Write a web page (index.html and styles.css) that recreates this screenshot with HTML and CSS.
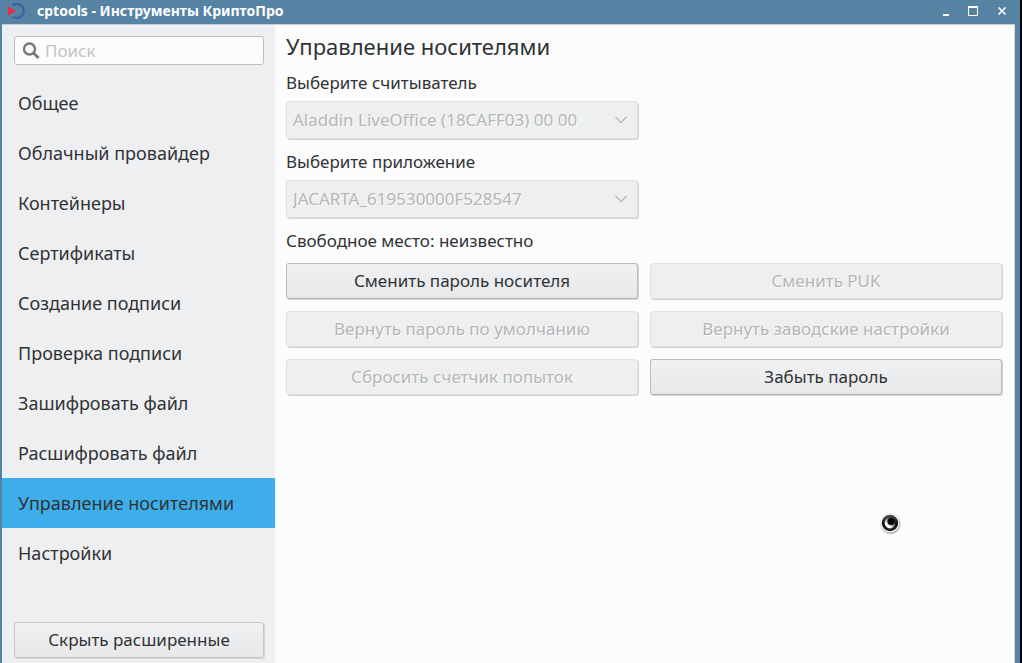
FILE: index.html
```html
<!DOCTYPE html>
<html lang="ru">
<head>
<meta charset="utf-8">
<title>cptools - Инструменты КриптоПро</title>
<link rel="stylesheet" href="styles.css">
</head>
<body>
<div class="window">
  <header class="titlebar">
    <svg class="logo" width="18" height="18" viewBox="0 0 18 18" aria-hidden="true">
      <path d="M4.500 3.400A7 7 0 1 1 4.500 14.600" fill="none" stroke="#3c64a0" stroke-width="2.400"/>
      <path d="M0 4.500 8 9 0 13.500z" fill="#ee2a3c"/>
    </svg>
    <h1 class="caption">cptools - Инструменты КриптоПро</h1>
    <div class="controls">
      <button class="control" type="button" aria-label="Свернуть"><svg width="12" height="12" viewBox="0 0 12 12"><path d="M3 9h6v2H3z" fill="#fff"/></svg></button>
      <button class="control" type="button" aria-label="Развернуть"><svg width="12" height="12" viewBox="0 0 12 12"><path d="M0 1h10v10H0zM1 3v7h8V3z" fill="#fff" fill-rule="evenodd"/></svg></button>
      <button class="control" type="button" aria-label="Закрыть"><svg width="12" height="12" viewBox="0 0 12 12"><path d="M2.500 2.500l7 7M9.500 2.500l-7 7" stroke="#fff" stroke-width="1.700"/></svg></button>
    </div>
  </header>
  <div class="body">
    <aside class="sidebar">
      <label class="search">
        <svg width="18" height="18" viewBox="0 0 18 18" aria-hidden="true"><circle cx="7.500" cy="7" r="5.500" fill="none" stroke="#76787a" stroke-width="2.400"/><path d="M11.300 10.800 16.500 16" stroke="#76787a" stroke-width="2.800"/></svg>
        <input class="search-input" type="text" placeholder="Поиск" aria-label="Поиск">
      </label>
      <nav class="nav">
        <a class="nav-item" href="#general">Общее</a>
        <a class="nav-item" href="#cloud">Облачный провайдер</a>
        <a class="nav-item" href="#containers">Контейнеры</a>
        <a class="nav-item" href="#certificates">Сертификаты</a>
        <a class="nav-item" href="#sign">Создание подписи</a>
        <a class="nav-item" href="#verify">Проверка подписи</a>
        <a class="nav-item" href="#encrypt">Зашифровать файл</a>
        <a class="nav-item" href="#decrypt">Расшифровать файл</a>
        <a class="nav-item nav-item-active" href="#tokens" aria-current="page">Управление носителями</a>
        <a class="nav-item" href="#settings">Настройки</a>
      </nav>
      <button class="button button-soft" type="button">Скрыть расширенные</button>
    </aside>
    <main class="content">
      <h2 class="title">Управление носителями</h2>
      <div class="grid">
        <div class="fields">
          <label class="label" for="reader">Выберите считыватель</label>
          <div class="combo">
            <select class="select" id="reader" disabled><option>Aladdin LiveOffice (18CAFF03) 00 00</option></select>
            <svg class="chevron" width="14" height="8" viewBox="0 0 14 8" aria-hidden="true"><path d="M1.500 1 7 6.500 12.500 1" fill="none" stroke="#b8babb" stroke-width="1.400"/></svg>
          </div>
          <label class="label" for="app">Выберите приложение</label>
          <div class="combo">
            <select class="select" id="app" disabled><option>JACARTA_619530000F528547</option></select>
            <svg class="chevron" width="14" height="8" viewBox="0 0 14 8" aria-hidden="true"><path d="M1.500 1 7 6.500 12.500 1" fill="none" stroke="#b8babb" stroke-width="1.400"/></svg>
          </div>
          <p class="label">Свободное место: неизвестно</p>
        </div>
      </div>
      <div class="grid actions">
        <button class="button" type="button">Сменить пароль носителя</button>
        <button class="button" type="button" disabled>Сменить PUK</button>
        <button class="button" type="button" disabled>Вернуть пароль по умолчанию</button>
        <button class="button" type="button" disabled>Вернуть заводские настройки</button>
        <button class="button" type="button" disabled>Сбросить счетчик попыток</button>
        <button class="button" type="button">Забыть пароль</button>
      </div>
    </main>
  </div>
  <svg class="pointer" width="24" height="24" viewBox="0 0 24 24" aria-hidden="true">
    <defs>
      <radialGradient id="halo"><stop offset="0.780" stop-color="#777" stop-opacity="0.700"/><stop offset="1" stop-color="#999" stop-opacity="0"/></radialGradient>
      <linearGradient id="ring" x1="0" y1="0" x2="0" y2="1"><stop offset="0" stop-color="#555"/><stop offset="0.500" stop-color="#111"/><stop offset="1" stop-color="#222"/></linearGradient>
      <linearGradient id="glow" x1="0" y1="1" x2="1" y2="0"><stop offset="0.300" stop-color="#fff"/><stop offset="0.750" stop-color="#333"/></linearGradient>
    </defs>
    <circle cx="12.500" cy="13" r="11" fill="url(#halo)"/>
    <circle cx="12" cy="12" r="9.500" fill="#f4f4f4"/>
    <circle cx="12" cy="12" r="8.200" fill="url(#ring)"/>
    <circle cx="12" cy="12" r="5.400" fill="url(#glow)"/>
    <circle cx="13" cy="10.400" r="3.500" fill="#080808"/>
  </svg>
</div>
</body>
</html>
```
FILE: styles.css
```css
* {
  box-sizing: border-box;
}

body {
  margin: 0;
  background: #000;
  color: #303336;
  font-family: "Noto Sans", "Open Sans", sans-serif;
  font-size: 17px;
  line-height: 24px;
}

.window {
  position: relative;
  display: flex;
  flex-direction: column;
  min-height: 100vh;
  margin-right: 2px;
  padding: 0 5px 0 2px;
  background: #5683a4;
}

.titlebar {
  display: flex;
  align-items: center;
  height: 24px;
  padding: 0 7px 2px 6px;
}

.caption {
  flex: 1;
  margin: 0 0 1px 11px;
  color: #fff;
  font-size: 14px;
  font-weight: 700;
  line-height: 20px;
}

.controls {
  display: flex;
  gap: 16px;
}

.control {
  display: flex;
  width: 12px;
  padding: 0;
  border: 0;
  background: none;
}

.body {
  display: flex;
  flex: 1;
  border-top: 1px solid #c3d0da;
  border-right: 1px solid #d5dce1;
  background: #fcfcfc;
}

.sidebar {
  display: flex;
  flex: none;
  flex-direction: column;
  width: 273px;
  padding: 11px 11px 5px 12px;
  background: #eeeff1;
}

.search {
  display: flex;
  align-items: center;
  gap: 5px;
  height: 29px;
  padding: 0 7px;
  border: 1px solid #bcbec0;
  border-radius: 3px;
  background: #fcfcfc;
}

.search-input {
  flex: 1;
  min-width: 0;
  padding: 0;
  border: 0;
  outline: 0;
  background: none;
  color: inherit;
  font: inherit;
}

.search-input::placeholder {
  color: #c3c4c5;
  opacity: 1;
}

.nav {
  display: flex;
  flex: 1;
  flex-direction: column;
  margin: 13px -11px 0 -12px;
}

.nav-item {
  padding: 13px 16px;
  color: #303336;
  font-size: 18px;
  text-decoration: none;
}

.nav-item-active {
  background: #3daee9;
}

.button {
  height: 36px;
  padding: 0 8px;
  border: 1px solid #b9bbbd;
  border-bottom-color: #adafb1;
  border-radius: 3px;
  background: linear-gradient(#f0f1f2, #e7e8ea);
  box-shadow: 1px 1px 0 #d5d6d7;
  color: #303336;
  font: inherit;
}

.button-soft {
  border-color: #c3c5c7;
}

.button:disabled,
.select:disabled {
  border-color: #e0e1e2;
  background: #eeeff0;
  box-shadow: 1px 1px 0 #d3d4d5;
  color: #b5b7b8;
  opacity: 1;
  text-shadow: 1px 1px 0 #fafafa;
}

.content {
  flex: 1;
  padding: 6px 12px 12px 11px;
}

.title {
  margin: 0 0 10px;
  font-size: 22px;
  font-weight: 400;
  line-height: 30px;
}

.grid {
  display: grid;
  grid-template-columns: 1fr 1fr;
  gap: 12px;
}

.fields {
  display: flex;
  flex-direction: column;
}

.label {
  margin: 0 0 6px;
}

.combo {
  position: relative;
  margin-bottom: 11px;
}

.select {
  display: block;
  width: 100%;
  height: 38px;
  padding: 0 32px 0 6px;
  border: 1px solid;
  border-radius: 3px;
  appearance: none;
  font: inherit;
}

.chevron {
  position: absolute;
  top: 15px;
  right: 10px;
}

.actions {
  margin-top: 4px;
}

.pointer {
  position: absolute;
  top: 511px;
  left: 878px;
}
```
